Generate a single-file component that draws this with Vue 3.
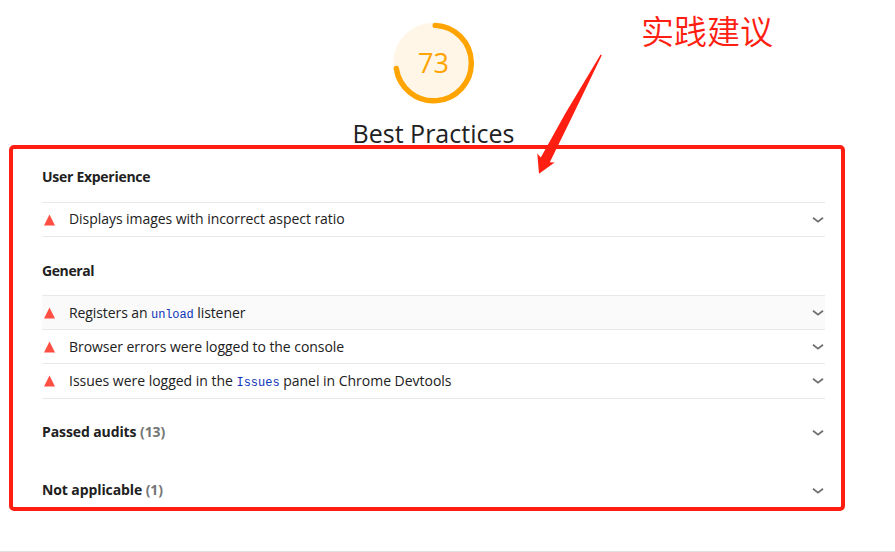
<script setup>
const groups = [
  {
    title: 'User Experience',
    cls: 'ux',
    audits: [{ id: 'aspect', parts: [{ text: 'Displays images with incorrect aspect ratio' }] }],
  },
  {
    title: 'General',
    cls: 'general',
    audits: [
      {
        id: 'unload',
        active: true,
        parts: [{ text: 'Registers an ' }, { text: 'unload', code: true }, { text: ' listener' }],
      },
      { id: 'errors', parts: [{ text: 'Browser errors were logged to the console' }] },
      {
        id: 'issues',
        parts: [
          { text: 'Issues were logged in the ' },
          { text: 'Issues', code: true },
          { text: ' panel in Chrome Devtools' },
        ],
      },
    ],
  },
]
const clumps = [
  { title: 'Passed audits', count: 13, cls: 'passed' },
  { title: 'Not applicable', count: 1, cls: 'na' },
]
</script>

<template>
  <main class="report">
    <header class="score">
      <div class="gauge">
        <svg class="ring" viewBox="0 0 82 82">
          <circle cx="40.5" cy="41" r="40.3" fill="#fff6e8" />
          <path d="M42.2 3.4A37.7 37.7 0 1 1 3.3 46.5" fill="none" stroke="#ffa400" stroke-width="5.4" stroke-linecap="round" />
        </svg>
        <span class="value">73</span>
      </div>
      <h1 class="name">Best Practices</h1>
    </header>

    <section v-for="g in groups" :key="g.title" class="group">
      <h2 class="heading" :class="g.cls">{{ g.title }}</h2>
      <ul class="audits">
        <li v-for="a in g.audits" :key="a.id" class="audit" :class="[a.id, { active: a.active }]">
          <svg class="fail" viewBox="0 0 12 12"><path d="M5.5 .5L11 11.5H0z" fill="#ff4e42" /></svg>
          <span class="label"><template v-for="p in a.parts" :key="p.text"><code v-if="p.code">{{ p.text }}</code><template v-else>{{ p.text }}</template></template></span>
          <svg class="chevron" viewBox="0 0 12 8"><path d="M1 1.7L6 5.7L11 1.7" /></svg>
        </li>
      </ul>
    </section>

    <section v-for="c in clumps" :key="c.title" class="clump" :class="c.cls">
      <h2 class="clump-title">{{ c.title }} <span class="count">({{ c.count }})</span></h2>
      <svg class="chevron" viewBox="0 0 12 8"><path d="M1 1.7L6 5.7L11 1.7" /></svg>
    </section>

    <div class="frame"></div>
    <svg class="arrow" viewBox="0 0 80 126">
      <path d="M70.6 4.6L71.8 5.2L42 67L19.8 112.2L24.6 112.6L9 123.8L7.3 103.6L10.8 107.6L35 64Z" />
    </svg>
    <p class="note">实践建议</p>
  </main>
</template>

<style>
body {
  background: #fff;
}
</style>

<style scoped>
.report {
  position: relative;
  box-sizing: border-box;
  width: 895px;
  height: 552px;
  padding: 0 70px 0 42px;
  overflow: hidden;
  border-bottom: 1px solid #e0e0e0;
  color: #212121;
  font-family: "Open Sans", "Noto Sans", sans-serif;
  font-size: 14px;
}
h1, h2, ul, p {
  margin: 0;
  padding: 0;
  font-weight: 400;
}
.score {
  display: flex;
  flex-direction: column;
  align-items: center;
  box-sizing: border-box;
  height: 150px;
  padding-top: 22px;
}
.gauge {
  display: grid;
  width: 82px;
  height: 82px;
}
.ring, .value {
  grid-area: 1 / 1;
}
.value {
  place-self: center;
  color: #ffa400;
  font-size: 27px;
  line-height: 30px;
}
.name {
  margin-top: 13px;
  font-size: 25px;
  line-height: 32px;
  white-space: nowrap;
}
.heading {
  display: flex;
  align-items: center;
  box-sizing: border-box;
  font-size: 14px;
  font-weight: 700;
  letter-spacing: -0.28px;
}
.heading.ux {
  height: 52px;
}
.heading.general {
  height: 58px;
  padding-top: 8px;
  letter-spacing: -0.4px;
}
.audits {
  list-style: none;
  border-top: 1px solid #e8e8e8;
}
.audit {
  display: flex;
  align-items: center;
  box-sizing: border-box;
  height: 34px;
  border-bottom: 1px solid #e8e8e8;
}
.audit.aspect .label {
  padding-bottom: 2px;
}
.audit.issues {
  height: 35px;
  padding-bottom: 1px;
}
.active {
  background: #fafafa;
}
.fail {
  width: 12px;
  height: 12px;
  margin: 0 13px 0 2px;
}
.label {
  flex: 1;
  letter-spacing: -0.05px;
  white-space: pre;
}
.unload .label {
  letter-spacing: -0.09px;
}
.issues .label {
  letter-spacing: -0.02px;
}
code {
  color: #0c35b8;
  font-family: "Liberation Mono", monospace;
  font-size: 12px;
}
.chevron {
  width: 12px;
  height: 8px;
  margin-right: 1px;
  fill: none;
  stroke: #707070;
  stroke-width: 1.8;
}
.clump {
  display: flex;
  align-items: center;
  justify-content: space-between;
  height: 58px;
}
.clump .chevron {
  margin-top: 2px;
}
.passed {
  margin-top: 4px;
}
.clump-title {
  padding-bottom: 2px;
  font-size: 14px;
  font-weight: 700;
  letter-spacing: -0.1px;
}
.count {
  color: #757575;
}
.frame {
  position: absolute;
  left: 9px;
  top: 145px;
  box-sizing: border-box;
  width: 836px;
  height: 366px;
  border: 4px solid #ff1e12;
  border-radius: 5px;
}
.arrow {
  position: absolute;
  left: 530px;
  top: 50px;
  width: 80px;
  height: 126px;
  fill: #ff1e12;
}
.note {
  position: absolute;
  left: 641px;
  top: 6px;
  color: #ff1e12;
  font-family: "Noto Sans CJK SC", sans-serif;
  font-size: 33px;
  font-weight: 350;
  line-height: 48px;
  white-space: nowrap;
}
</style>
